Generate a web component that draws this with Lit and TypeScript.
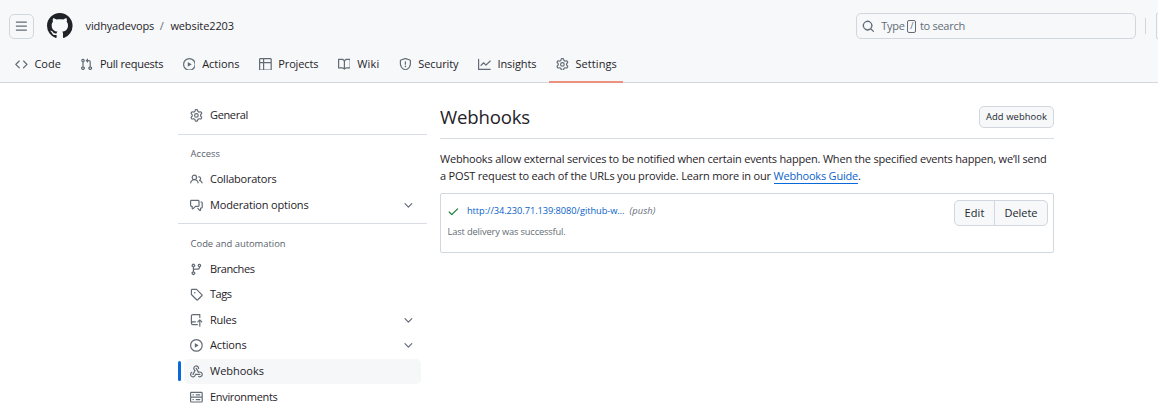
import { LitElement, html, css, svg } from "lit";
import { customElement, property } from "lit/decorators.js";
import { classMap } from "lit/directives/class-map.js";

const ICONS: Record<string, string> = {
  bars: "M1 2.75A.75.75 0 0 1 1.75 2h12.5a.75.75 0 0 1 0 1.5H1.75A.75.75 0 0 1 1 2.75Zm0 5A.75.75 0 0 1 1.75 7h12.5a.75.75 0 0 1 0 1.5H1.75A.75.75 0 0 1 1 7.75ZM1.75 12h12.5a.75.75 0 0 1 0 1.5H1.75a.75.75 0 0 1 0-1.5Z",
  mark: "M8 0c4.42 0 8 3.58 8 8a8.013 8.013 0 0 1-5.45 7.59c-.4.08-.55-.17-.55-.38 0-.27.01-1.13.01-2.2 0-.75-.25-1.23-.54-1.48 1.78-.2 3.65-.88 3.65-3.95 0-.88-.31-1.59-.82-2.15.08-.2.36-1.02-.08-2.12 0 0-.67-.22-2.2.82-.64-.18-1.32-.27-2-.27-.68 0-1.36.09-2 .27-1.53-1.03-2.2-.82-2.2-.82-.44 1.1-.16 1.92-.08 2.12-.51.56-.82 1.28-.82 2.15 0 3.06 1.86 3.75 3.64 3.95-.23.2-.44.55-.51 1.07-.46.21-1.61.55-2.33-.66-.15-.24-.6-.83-1.23-.82-.67.01-.27.38.01.53.34.19.73.9.82 1.13.16.45.68 1.31 2.69.94 0 .67.01 1.3.01 1.49 0 .21-.15.45-.55.38A7.995 7.995 0 0 1 0 8c0-4.42 3.58-8 8-8Z",
  search: "M10.68 11.74a6 6 0 0 1-7.922-8.982 6 6 0 0 1 8.982 7.922l3.04 3.04a.749.749 0 0 1-.326 1.275.749.749 0 0 1-.734-.215ZM11.5 7a4.499 4.499 0 1 0-8.997 0A4.499 4.499 0 0 0 11.5 7Z",
  code: "m11.28 3.22 4.25 4.25a.75.75 0 0 1 0 1.06l-4.25 4.25a.749.749 0 0 1-1.275-.326.749.749 0 0 1 .215-.734L13.94 8l-3.72-3.72a.749.749 0 0 1 .326-1.275.749.749 0 0 1 .734.215Zm-6.56 0a.751.751 0 0 1 1.042.018.751.751 0 0 1 .018 1.042L2.06 8l3.72 3.72a.749.749 0 0 1-.326 1.275.749.749 0 0 1-.734-.215L.47 8.53a.75.75 0 0 1 0-1.06Z",
  pull: "M1.5 3.25a2.25 2.25 0 1 1 3 2.122v5.256a2.251 2.251 0 1 1-1.5 0V5.372A2.25 2.25 0 0 1 1.5 3.25Zm5.677-.177L9.573.677A.25.25 0 0 1 10 .854V2.5h1A2.5 2.5 0 0 1 13.5 5v5.628a2.251 2.251 0 1 1-1.5 0V5a1 1 0 0 0-1-1h-1v1.646a.25.25 0 0 1-.427.177L7.177 3.427a.25.25 0 0 1 0-.354ZM3.75 2.5a.75.75 0 1 0 0 1.5.75.75 0 0 0 0-1.5Zm0 9.5a.75.75 0 1 0 0 1.5.75.75 0 0 0 0-1.5Zm8.25.75a.75.75 0 1 0 1.5 0 .75.75 0 0 0-1.5 0Z",
  play: "M8 0a8 8 0 1 1 0 16A8 8 0 0 1 8 0ZM1.5 8a6.5 6.5 0 1 0 13 0 6.5 6.5 0 0 0-13 0Zm4.879-2.773 4.264 2.559a.25.25 0 0 1 0 .428l-4.264 2.559A.25.25 0 0 1 6 10.559V5.442a.25.25 0 0 1 .379-.215Z",
  table: "M0 1.75C0 .784.784 0 1.75 0h12.5C15.216 0 16 .784 16 1.75v12.5A1.75 1.75 0 0 1 14.25 16H1.75A1.75 1.75 0 0 1 0 14.25ZM6.5 6.5v8h7.75a.25.25 0 0 0 .25-.25V6.5Zm8-1.5V1.75a.25.25 0 0 0-.25-.25H6.5V5Zm-13 1.5v7.75c0 .138.112.25.25.25H5v-8ZM5 5V1.5H1.75a.25.25 0 0 0-.25.25V5Z",
  book: "M0 1.75A.75.75 0 0 1 .75 1h4.253c1.227 0 2.317.59 3 1.501A3.743 3.743 0 0 1 11.006 1h4.245a.75.75 0 0 1 .75.75v10.5a.75.75 0 0 1-.75.75h-4.507a2.25 2.25 0 0 0-1.591.659l-.622.621a.75.75 0 0 1-1.06 0l-.622-.621A2.25 2.25 0 0 0 5.258 13H.75a.75.75 0 0 1-.75-.75Zm7.251 10.324.004-5.073-.002-2.253A2.25 2.25 0 0 0 5.003 2.5H1.5v9h3.757a3.75 3.75 0 0 1 1.994.574ZM8.755 4.75l-.004 7.322a3.752 3.752 0 0 1 1.992-.572H14.5v-9h-3.495a2.25 2.25 0 0 0-2.25 2.25Z",
  shield: "M7.467.133a1.748 1.748 0 0 1 1.066 0l5.25 1.68A1.75 1.75 0 0 1 15 3.48V7c0 1.566-.32 3.182-1.303 4.682-.983 1.498-2.585 2.813-5.032 3.855a1.697 1.697 0 0 1-1.33 0c-2.447-1.042-4.049-2.357-5.032-3.855C1.32 10.182 1 8.566 1 7V3.48a1.75 1.75 0 0 1 1.217-1.667Zm.61 1.429a.25.25 0 0 0-.153 0l-5.25 1.68a.25.25 0 0 0-.174.238V7c0 1.358.275 2.666 1.057 3.86.784 1.194 2.121 2.34 4.366 3.297a.196.196 0 0 0 .154 0c2.245-.956 3.582-2.104 4.366-3.298C13.225 9.666 13.5 8.36 13.5 7V3.48a.251.251 0 0 0-.174-.237l-5.25-1.68ZM8.75 4.75v3a.75.75 0 0 1-1.5 0v-3a.75.75 0 0 1 1.5 0ZM9 10.5a1 1 0 1 1-2 0 1 1 0 0 1 2 0Z",
  graph: "M1.5 1.75V13.5h13.75a.75.75 0 0 1 0 1.5H.75a.75.75 0 0 1-.75-.75V1.75a.75.75 0 0 1 1.5 0Zm14.28 2.53-5.25 5.25a.75.75 0 0 1-1.06 0L7 7.06 4.28 9.78a.751.751 0 0 1-1.042-.018.751.751 0 0 1-.018-1.042l3.25-3.25a.75.75 0 0 1 1.06 0L10 7.94l4.72-4.72a.751.751 0 0 1 1.042.018.751.751 0 0 1 .018 1.042Z",
  gear: "M8 0a8.2 8.2 0 0 1 .701.031C9.444.095 9.99.645 10.16 1.29l.288 1.107c.018.066.079.158.212.224.231.114.454.243.668.386.123.082.233.09.299.071l1.103-.303c.644-.176 1.392.021 1.82.63.27.385.506.792.704 1.218.315.675.111 1.422-.364 1.891l-.814.806c-.049.048-.098.147-.088.294.016.257.016.515 0 .772-.01.147.038.246.088.294l.814.806c.475.469.679 1.216.364 1.891a7.977 7.977 0 0 1-.704 1.217c-.428.61-1.176.807-1.82.63l-1.102-.302c-.067-.019-.177-.011-.3.071a5.909 5.909 0 0 1-.668.386c-.133.066-.194.158-.211.224l-.29 1.106c-.168.646-.715 1.196-1.458 1.26a8.006 8.006 0 0 1-1.402 0c-.743-.064-1.289-.614-1.458-1.26l-.289-1.106c-.018-.066-.079-.158-.212-.224a5.738 5.738 0 0 1-.668-.386c-.123-.082-.233-.09-.299-.071l-1.103.303c-.644.176-1.392-.021-1.82-.63a8.12 8.12 0 0 1-.704-1.218c-.315-.675-.111-1.422.363-1.891l.815-.806c.05-.048.098-.147.088-.294a6.214 6.214 0 0 1 0-.772c.01-.147-.038-.246-.088-.294l-.815-.806C.635 6.045.431 5.298.746 4.623a7.92 7.92 0 0 1 .704-1.217c.428-.61 1.176-.807 1.82-.63l1.102.302c.067.019.177.011.3-.071.214-.143.437-.272.668-.386.133-.066.194-.158.211-.224l.29-1.106C6.009.645 6.556.095 7.299.03 7.53.01 7.764 0 8 0Zm-.571 1.525c-.036.003-.108.036-.137.146l-.289 1.105c-.147.561-.549.967-.998 1.189-.173.086-.34.183-.5.29-.417.278-.97.423-1.529.27l-1.103-.303c-.109-.03-.175.016-.195.045-.22.312-.412.644-.573.99-.014.031-.021.11.059.19l.815.806c.411.406.562.957.53 1.456a4.709 4.709 0 0 0 0 .582c.032.499-.119 1.05-.53 1.456l-.815.806c-.081.08-.073.159-.059.19.162.346.353.677.573.989.02.03.085.076.195.046l1.102-.303c.56-.153 1.113-.008 1.53.27.161.107.328.204.501.29.447.222.85.629.997 1.189l.289 1.105c.029.109.101.143.137.146a6.6 6.6 0 0 0 1.142 0c.036-.003.108-.036.137-.146l.289-1.105c.147-.561.549-.967.998-1.189.173-.086.34-.183.5-.29.417-.278.97-.423 1.529-.27l1.103.303c.109.029.175-.016.195-.045.22-.313.411-.644.573-.99.014-.031.021-.11-.059-.19l-.815-.806c-.411-.406-.562-.957-.53-1.456a4.709 4.709 0 0 0 0-.582c-.032-.499.119-1.05.53-1.456l.815-.806c.081-.08.073-.159.059-.19a6.464 6.464 0 0 0-.573-.989c-.02-.03-.085-.076-.195-.046l-1.102.303c-.56.153-1.113.008-1.53-.27a4.44 4.44 0 0 0-.501-.29c-.447-.222-.85-.629-.997-1.189l-.289-1.105c-.029-.11-.101-.143-.137-.146a6.6 6.6 0 0 0-1.142 0ZM11 8a3 3 0 1 1-6 0 3 3 0 0 1 6 0ZM9.5 8a1.5 1.5 0 1 0-3.001.001A1.5 1.5 0 0 0 9.5 8Z",
  people: "M2 5.5a3.5 3.5 0 1 1 5.898 2.549 5.508 5.508 0 0 1 3.034 4.084.75.75 0 1 1-1.482.235 4 4 0 0 0-7.9 0 .75.75 0 0 1-1.482-.236A5.507 5.507 0 0 1 3.102 8.05 3.493 3.493 0 0 1 2 5.5ZM11 4a3.001 3.001 0 0 1 2.22 5.018 5.01 5.01 0 0 1 2.56 3.012.749.749 0 0 1-.885.954.752.752 0 0 1-.549-.514 3.507 3.507 0 0 0-2.522-2.372.75.75 0 0 1-.574-.73v-.352a.75.75 0 0 1 .416-.672A1.5 1.5 0 0 0 11 5.5.75.75 0 0 1 11 4Zm-5.5-.5a2 2 0 1 0-.001 3.999A2 2 0 0 0 5.5 3.5Z",
  discussion: "M1.75 1h8.5c.966 0 1.75.784 1.75 1.75v5.5A1.75 1.75 0 0 1 10.25 10H7.061l-2.574 2.573A1.458 1.458 0 0 1 2 11.543V10h-.25A1.75 1.75 0 0 1 0 8.25v-5.5C0 1.784.784 1 1.75 1ZM1.5 2.75v5.5c0 .138.112.25.25.25h1a.75.75 0 0 1 .75.75v2.19l2.72-2.72a.749.749 0 0 1 .53-.22h3.5a.25.25 0 0 0 .25-.25v-5.5a.25.25 0 0 0-.25-.25h-8.5a.25.25 0 0 0-.25.25Zm13 2a.25.25 0 0 0-.25-.25h-.5a.75.75 0 0 1 0-1.5h.5c.966 0 1.75.784 1.75 1.75v5.5A1.75 1.75 0 0 1 14.25 12H14v1.543a1.458 1.458 0 0 1-2.487 1.03L9.22 12.28a.749.749 0 0 1 .326-1.275.749.749 0 0 1 .734.215l2.22 2.22v-2.19a.75.75 0 0 1 .75-.75h1a.25.25 0 0 0 .25-.25Z",
  chevron: "M12.78 5.22a.749.749 0 0 1 0 1.06l-4.25 4.25a.749.749 0 0 1-1.06 0L3.22 6.28a.749.749 0 1 1 1.06-1.06L8 8.939l3.72-3.719a.749.749 0 0 1 1.06 0Z",
  branch: "M9.5 3.25a2.25 2.25 0 1 1 3 2.122V6A2.5 2.5 0 0 1 10 8.5H6a1 1 0 0 0-1 1v1.128a2.251 2.251 0 1 1-1.5 0V5.372a2.25 2.25 0 1 1 1.5 0v1.836A2.493 2.493 0 0 1 6 7h4a1 1 0 0 0 1-1v-.628A2.25 2.25 0 0 1 9.5 3.25Zm-6 0a.75.75 0 1 0 1.5 0 .75.75 0 0 0-1.5 0Zm8.25-.75a.75.75 0 1 0 0 1.5.75.75 0 0 0 0-1.5ZM4.25 12a.75.75 0 1 0 0 1.5.75.75 0 0 0 0-1.5Z",
  tag: "M1 7.775V2.75C1 1.784 1.784 1 2.75 1h5.025c.464 0 .91.184 1.238.513l6.25 6.25a1.75 1.75 0 0 1 0 2.474l-5.026 5.026a1.75 1.75 0 0 1-2.474 0l-6.25-6.25A1.752 1.752 0 0 1 1 7.775Zm1.5 0c0 .066.026.13.073.177l6.25 6.25a.25.25 0 0 0 .354 0l5.025-5.025a.25.25 0 0 0 0-.354l-6.25-6.25a.25.25 0 0 0-.177-.073H2.75a.25.25 0 0 0-.25.25ZM6 5a1 1 0 1 1 0 2 1 1 0 0 1 0-2Z",
  rules: "M1 2.5A2.5 2.5 0 0 1 3.5 0h8.75a.75.75 0 0 1 .75.75v3.5a.75.75 0 0 1-1.5 0V1.5h-8a1 1 0 0 0-1 1v6.708A2.493 2.493 0 0 1 3.5 9h3.25a.75.75 0 0 1 0 1.5H3.5a1 1 0 0 0 0 2h5.75a.75.75 0 0 1 0 1.5H3.5A2.5 2.5 0 0 1 1 11.5Zm13.23 7.79-1.224-1.224v6.184a.75.75 0 0 1-1.5 0V9.066L10.28 10.29a.75.75 0 0 1-1.06-1.061l2.505-2.504a.75.75 0 0 1 1.06 0L15.29 9.23a.751.751 0 0 1-.018 1.042.751.751 0 0 1-1.042.018Z",
  webhook: "M5.5 4.25a2.25 2.25 0 0 1 4.5 0 .75.75 0 0 0 1.5 0 3.75 3.75 0 1 0-6.14 2.889l-2.272 4.258a.75.75 0 0 0 1.324.706L7 7.25a.75.75 0 0 0-.309-1.015A2.25 2.25 0 0 1 5.5 4.25ZM7.364 3.607a.75.75 0 0 1 1.03.257l2.608 4.349a3.75 3.75 0 1 1-.628 6.785.75.75 0 0 1 .752-1.299 2.25 2.25 0 1 0-.033-3.88.75.75 0 0 1-1.03-.256L7.107 4.636a.75.75 0 0 1 .257-1.03ZM2.9 8.776A.75.75 0 0 1 2.625 9.8 2.25 2.25 0 1 0 6 11.75a.75.75 0 0 1 .75-.751h5.5a.75.75 0 0 1 0 1.5H7.425a3.751 3.751 0 1 1-5.55-3.998.75.75 0 0 1 1.024.274Z",
  server: "M1.75 1h12.5c.966 0 1.75.784 1.75 1.75v4c0 .372-.116.717-.314 1 .198.283.314.628.314 1v4a1.75 1.75 0 0 1-1.75 1.75H1.75A1.75 1.75 0 0 1 0 12.75v-4c0-.358.109-.707.314-1a1.739 1.739 0 0 1-.314-1v-4C0 1.784.784 1 1.75 1ZM1.5 2.75v4c0 .138.112.25.25.25h12.5a.25.25 0 0 0 .25-.25v-4a.25.25 0 0 0-.25-.25H1.75a.25.25 0 0 0-.25.25Zm.25 5.75a.25.25 0 0 0-.25.25v4c0 .138.112.25.25.25h12.5a.25.25 0 0 0 .25-.25v-4a.25.25 0 0 0-.25-.25ZM7 4.75A.75.75 0 0 1 7.75 4h4.5a.75.75 0 0 1 0 1.5h-4.5A.75.75 0 0 1 7 4.75ZM7.75 10h4.5a.75.75 0 0 1 0 1.5h-4.5a.75.75 0 0 1 0-1.5ZM3 4.75A.75.75 0 0 1 3.75 4h.5a.75.75 0 0 1 0 1.5h-.5A.75.75 0 0 1 3 4.75ZM3.75 10h.5a.75.75 0 0 1 0 1.5h-.5a.75.75 0 0 1 0-1.5Z",
  check: "M13.78 4.22a.75.75 0 0 1 0 1.06l-7.25 7.25a.75.75 0 0 1-1.06 0L2.22 9.28a.751.751 0 0 1 .018-1.042.751.751 0 0 1 1.042-.018L6 10.94l6.72-6.72a.75.75 0 0 1 1.06 0Z",
};

const icon = (name: string, size = 12.8) => html`<svg
  class="icon"
  width=${size}
  height=${size}
  viewBox="0 0 16 16"
  aria-hidden="true"
>${svg`<path fill-rule="evenodd" d=${ICONS[name]}></path>`}</svg>`;

/** One line of text whose tracking is adjusted so that it spans a set width. */
@customElement("fit-text")
class FitText extends LitElement {
  @property() text = "";
  @property({ type: Number }) span = 0;

  static styles = css`
    :host { display: inline-block; white-space: pre; }
  `;

  render() {
    return html`<span>${this.text}</span>`;
  }

  updated() {
    const el = this.renderRoot.querySelector("span") as HTMLElement;
    el.style.letterSpacing = "0px";
    const natural = el.getBoundingClientRect().width;
    el.style.letterSpacing = `${(this.span - natural) / this.text.length}px`;
    this.style.width = `${this.span}px`;
  }
}

const fit = (text: string, span: number) =>
  html`<fit-text .text=${text} .span=${span}></fit-text>`;

const TABS: [string, string, number][] = [
  ["code", "Code", 26.6],
  ["pull", "Pull requests", 63.4],
  ["play", "Actions", 37.2],
  ["table", "Projects", 40],
  ["book", "Wiki", 22.2],
  ["shield", "Security", 40.2],
  ["graph", "Insights", 39],
  ["gear", "Settings", 41.5],
];

type Row = { icon: string; label: string; span: number; more?: boolean; current?: boolean };
const GROUPS: { title?: string; span?: number; rows: Row[] }[] = [
  { rows: [{ icon: "gear", label: "General", span: 38 }] },
  {
    title: "Access",
    span: 29.5,
    rows: [
      { icon: "people", label: "Collaborators", span: 66.5 },
      { icon: "discussion", label: "Moderation options", span: 98.5, more: true },
    ],
  },
  {
    title: "Code and automation",
    span: 95,
    rows: [
      { icon: "branch", label: "Branches", span: 44.5 },
      { icon: "tag", label: "Tags", span: 21.5 },
      { icon: "rules", label: "Rules", span: 26.5, more: true },
      { icon: "play", label: "Actions", span: 36.5, more: true },
      { icon: "webhook", label: "Webhooks", span: 54, current: true },
      { icon: "server", label: "Environments", span: 67.5 },
    ],
  },
];

@customElement("app-root")
class AppRoot extends LitElement {
  static styles = css`
    :host {
      display: block;
      height: 409px;
      overflow: hidden;
      background: #fff;
      color: #1f2328;
      font: 400 11px/16.8px "Open Sans", "Noto Sans", sans-serif;
    }
    * { box-sizing: border-box; }
    .icon { display: block; flex: none; fill: #636c76; }
    header {
      height: 83px;
      background: #f6f8fa;
      border-bottom: 1px solid #d0d7de;
      overflow: visible;
    }
    .top { display: flex; align-items: center; height: 39px; padding: 13px 0 0 9px; }
    .burger {
      display: grid;
      place-items: center;
      width: 25px;
      height: 25px;
      border: 1px solid #d0d7de;
      border-radius: 5px;
    }
    .mark { margin-left: 13px; }
    .mark .icon { fill: #1f2328; }
    .crumbs { display: flex; margin-left: 13px; gap: 5.6px; }
    .slash { color: #636c76; }
    .medium { font-weight: 500; }
    .search {
      display: flex;
      align-items: center;
      width: 280px;
      height: 26px;
      margin-left: auto;
      padding-left: 5px;
      border: 1px solid #d0d7de;
      border-radius: 5px;
      color: #636c76;
    }
    .search .icon { margin-right: 6.4px; }
    .key {
      width: 9px;
      height: 13px;
      margin: 1px 3.4px 0 2.8px;
      border: 1px solid #636c76;
      border-radius: 2px;
      font-size: 9px;
      line-height: 10px;
      text-align: center;
    }
    .rule { width: 1px; height: 16px; margin-left: 9px; background: #d0d7de; }
    .edge {
      width: 2px;
      height: 26px;
      margin-left: 10px;
      border: 1px solid #d0d7de;
      border-right: 0;
      border-radius: 5px 0 0 5px;
    }
    nav { display: flex; height: 44px; padding: 6px 0 0 8.4px; }
    .tab {
      display: flex;
      align-items: center;
      gap: 6.8px;
      height: 38px;
      padding: 2px 6.2px 0 6.4px;
      margin-right: 6.75px;
      border-bottom: 2px solid transparent;
    }
    .tab.on { border-color: #ee9280; }
    .page { display: flex; align-items: flex-start; }
    aside { width: 249px; margin-left: 178px; padding-top: 19.4px; }
    .group:first-child { padding-bottom: 0.8px; }
    .group + .group { border-top: 1px solid #d8dee4; margin-top: 5.2px; padding-top: 6.4px; }
    .heading {
      height: 25.6px;
      padding-left: 12.6px;
      font-size: 9.4px;
      font-weight: 500;
      line-height: 25px;
      color: #59626c;
    }
    .row { display: flex; align-items: center; height: 25.6px; width: 243px; }
    .bar { width: 3px; height: 20px; margin-right: 3px; border-radius: 3px; }
    .cell {
      display: flex;
      align-items: center;
      gap: 6.8px;
      flex: 1;
      height: 100%;
      padding: 0 6.4px;
      border-radius: 5px;
    }
    .cell .icon:last-child { margin-left: auto; }
    .row.on .bar { background: #0969da; }
    .row.on .cell { background: #f5f7f9; }
    main { width: 614px; margin-left: 13px; padding-top: 19px; }
    .title {
      display: flex;
      align-items: flex-start;
      justify-content: space-between;
      height: 37px;
      border-bottom: 1px solid #d8dee4;
    }
    h2 { margin: 0; padding-top: 3px; font-size: 18.6px; font-weight: 400; line-height: 24px; }
    .btn {
      display: grid;
      place-items: center;
      border: 1px solid #d0d7de;
      background: #f6f8fa;
      color: #24292f;
    }
    .add {
      width: 75px;
      height: 22px;
      margin-top: 4px;
      border-radius: 5px;
      font-size: 9.4px;
      font-weight: 500;
    }
    .intro { display: flex; flex-direction: column; padding-top: 12px; height: 54px; }
    .line { display: flex; height: 16.8px; }
    .link { color: #0b5fca; }
    .guide { height: 16px; border-bottom: 1px solid #0969da; }
    .box {
      display: flex;
      justify-content: space-between;
      height: 60px;
      padding: 6px 5px 0 6.6px;
      border: 1px solid #d0d7de;
      border-radius: 2px;
      font-size: 9.3px;
    }
    .hook { display: flex; align-items: center; height: 21px; padding-top: 1px; }
    .hook .icon { margin: 0 7.2px 0 -0.6px; fill: #1a7f37; }
    .event { color: #636c76; font-style: italic; margin-left: 5px; }
    .note { color: #636c76; padding-top: 3px; }
    .pair { display: flex; font-size: 11px; font-weight: 500; }
    .pair .btn { height: 26px; }
    .edit { width: 41px; border-radius: 5px 0 0 5px; }
    .delete { width: 54px; margin-left: -1px; border-radius: 0 5px 5px 0; }
  `;

  render() {
    return html`
      <header>
        <div class="top">
          <div class="burger">${icon("bars")}</div>
          <div class="mark">${icon("mark", 25.6)}</div>
          <div class="crumbs">
            ${fit("vidhyadevops", 68.6)}<span class="slash">${fit("/", 5)}</span>
            <span class="medium">${fit("website2203", 63.6)}</span>
          </div>
          <div class="search">
            ${icon("search")}${fit("Type", 23.5)}<span class="key">/</span>${fit("to search", 45)}
          </div>
          <div class="rule"></div>
          <div class="edge"></div>
        </div>
        <nav>
          ${TABS.map(
            ([name, label, span]) => html`<div
              class=${classMap({ tab: true, on: label === "Settings", medium: label === "Settings" })}
            >${icon(name)}${fit(label, span)}</div>`
          )}
        </nav>
      </header>
      <div class="page">
        <aside>
          ${GROUPS.map(
            (g) => html`<div class="group">
              ${g.title ? html`<div class="heading">${fit(g.title, g.span ?? 0)}</div>` : null}
              ${g.rows.map(
                (r) => html`<div class=${classMap({ row: true, on: !!r.current, medium: !!r.current })}>
                  <span class="bar"></span>
                  <div class="cell">${icon(r.icon)}${fit(r.label, r.span)}${r.more ? icon("chevron") : null}</div>
                </div>`
              )}
            </div>`
          )}
        </aside>
        <main>
          <div class="title">
            <h2>${fit("Webhooks", 90)}</h2>
            <div class="btn add">${fit("Add webhook", 61)}</div>
          </div>
          <div class="intro">
            <div class="line">
              ${fit("Webhooks allow external services to be notified when certain events happen. When the specified events happen, we’ll send", 606.5)}
            </div>
            <div class="line">
              ${fit("a POST request to each of the URLs you provide. Learn more in our ", 333.5)}<span
                class="link guide">${fit("Webhooks Guide", 84.5)}</span>${fit(".", 3)}
            </div>
          </div>
          <div class="box">
            <div>
              <div class="hook">
                ${icon("check")}<span class="link">${fit("http://34.230.71.139:8080/github-w…", 157.5)}</span>
                <span class="event">${fit("(push)", 26)}</span>
              </div>
              <div class="note">${fit("Last delivery was successful.", 118)}</div>
            </div>
            <div class="pair">
              <div class="btn edit">${fit("Edit", 20)}</div>
              <div class="btn delete">${fit("Delete", 33)}</div>
            </div>
          </div>
        </main>
      </div>
    `;
  }
}
